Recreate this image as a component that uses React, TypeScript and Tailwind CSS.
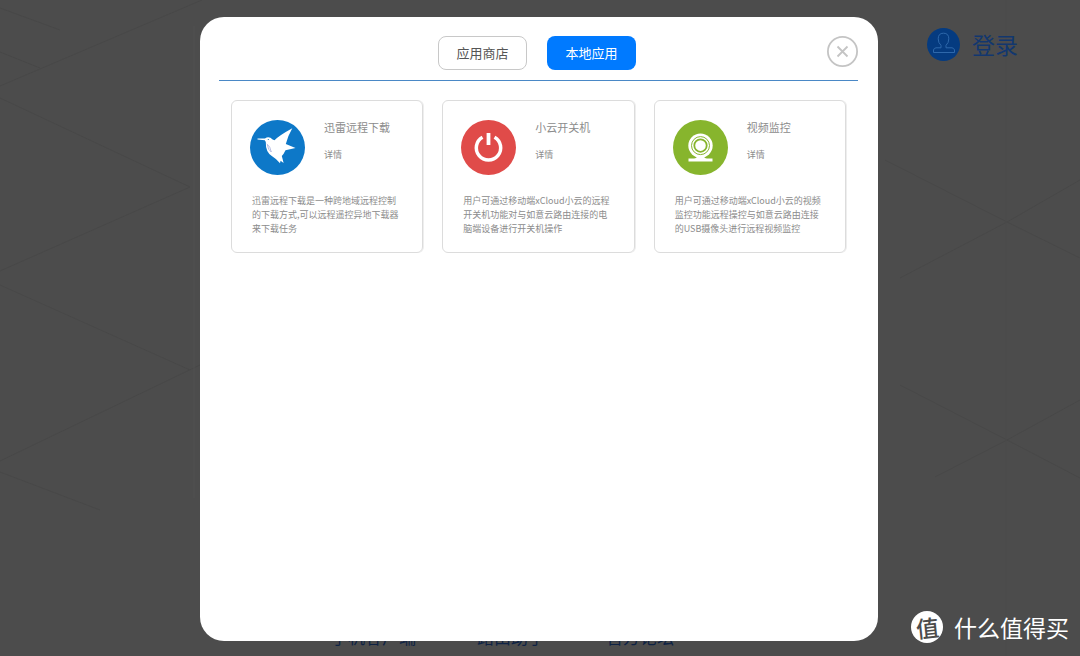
import type { ReactNode } from "react";

type App = {
  name: string;
  lines: string[];
  icon: ReactNode;
};

function BirdIcon() {
  return (
    <svg viewBox="0 0 55 55" className="size-[55px] shrink-0" aria-hidden>
      <circle cx="27.5" cy="27.5" r="27.5" fill="#0d78c8" />
      <path
        fill="#fff"
        d="M7.5 18.6 L15 18.4 Q19 15.6 22.6 19.6 L24.5 20.2 Q29 15.5 42.3 8.2 Q37.5 16.5 35.8 24 L45.5 28 L35.5 30.2 Q33.5 34.5 31.8 36 Q32.8 39.5 33.6 43 L30.6 40.8 L30 43.2 Q26 38.5 21.8 36 Q15.5 32 15.8 22 L14.8 20.2 L7.5 19.6 Z"
      />
      <path d="M16.8 23.8 Q20.5 26.5 21.3 32 Q18 30 17.4 25" fill="none" stroke="#a9b0dc" strokeWidth="0.8" />
      <circle cx="18.3" cy="19.5" r="0.6" fill="#0d78c8" />
    </svg>
  );
}

function PowerIcon() {
  return (
    <svg viewBox="0 0 55 55" className="size-[55px] shrink-0" aria-hidden>
      <circle cx="27.5" cy="27.5" r="27.5" fill="#e04b49" />
      <path d="M21.5 17.2 A12.2 12.2 0 1 0 33.5 17.2" fill="none" stroke="#fff" strokeWidth="3.5" />
      <path d="M27.5 13 V25" stroke="#fff" strokeWidth="3.8" />
    </svg>
  );
}

function CameraIcon() {
  return (
    <svg viewBox="0 0 55 55" className="size-[55px] shrink-0" aria-hidden>
      <circle cx="27.5" cy="27.5" r="27.5" fill="#87b52d" />
      <circle cx="27.5" cy="25.6" r="12.2" fill="#fff" />
      <circle cx="27.5" cy="25.6" r="9" fill="none" stroke="#87b52d" strokeWidth="1" />
      <circle cx="27.5" cy="25.6" r="6.2" fill="none" stroke="#87b52d" strokeWidth="1.8" />
      <path d="M24 36 H31 Q31 38.3 34 38.4 H39.5 V41.6 H15.5 V38.4 H21 Q24 38.3 24 36 Z" fill="#fff" />
    </svg>
  );
}

const apps: App[] = [
  {
    name: "迅雷远程下载",
    lines: ["迅雷远程下载是一种跨地域远程控制", "的下载方式,可以远程遥控异地下载器", "来下载任务"],
    icon: <BirdIcon />,
  },
  {
    name: "小云开关机",
    lines: ["用户可通过移动端xCloud小云的远程", "开关机功能对与如意云路由连接的电", "脑端设备进行开关机操作"],
    icon: <PowerIcon />,
  },
  {
    name: "视频监控",
    lines: ["用户可通过移动端xCloud小云的视频", "监控功能远程操控与如意云路由连接", "的USB摄像头进行远程视频监控"],
    icon: <CameraIcon />,
  },
];

function Backdrop() {
  return (
    <div className="pointer-events-none absolute inset-0 flex justify-between overflow-hidden" aria-hidden>
      <svg width="202" height="656" fill="none" stroke="#484848">
        <path d="M0 8 L60 30 M0 52 L40 68 M0 86 L202 0 M0 98 L190 187 L0 271 M0 285 L190 370 M202 364 L0 461 M0 472 L100 510" />
        <path d="M194 26 V498" stroke="#505050" />
      </svg>
      <svg width="202" height="656" fill="none" stroke="#484848">
        <path d="M7 160 L129 222 L202 258 M22 278 L129 222 L202 180 M22 385 L129 440 L202 478 M57 477 L129 440 L202 400" />
        <path d="M128 0 V656" stroke="#4a4a4a" />
      </svg>
    </div>
  );
}

function AppCard({ app }: { app: App }) {
  return (
    <article className="h-[153px] min-w-0 flex-1 rounded-md border border-[#dcdcdc] px-[18px] pt-[19px] shadow-[1px_0_0_#eeeeee]">
      <div className="flex gap-[19px]">
        {app.icon}
        <div className="flex flex-col items-start">
          <h2 className="text-[11px] leading-[14px] whitespace-nowrap text-[#8c8c8c]">{app.name}</h2>
          <a href="#" className="mt-[13px] text-[9px] leading-4 text-[#8c8c8c]">
            详情
          </a>
        </div>
      </div>
      <p className="mt-[19px] pl-0.5 text-[9px] leading-[14px] whitespace-nowrap text-[#8c8c8c]">
        {app.lines.map((line) => (
          <span key={line} className="block">
            {line}
          </span>
        ))}
      </p>
    </article>
  );
}

export default function App() {
  return (
    <div className="relative flex min-h-screen flex-col justify-between bg-[#4c4c4c] font-['Noto_Sans_CJK_SC',sans-serif]">
      <Backdrop />

      <header className="flex justify-end pt-7 pr-[62px]">
        <a href="#" className="relative flex items-center gap-3 text-[23px] leading-[33px] text-[#12376f]">
          <svg viewBox="0 0 33 33" className="size-[33px]" fill="none" stroke="#2e68ab" aria-hidden>
            <circle cx="16.5" cy="16.5" r="16.5" fill="#053b80" stroke="none" />
            <path d="M11.2 10.8 Q11.2 5.2 16.5 5.2 Q21.8 5.2 21.8 10.8 Q21.8 15 19 17.3 V19.8 H25 Q27 20 27.5 22 V24.5 H6.5 V22 Q7 20 9 19.8 H14 V17.3 Q11.2 15 11.2 10.8 Z" />
          </svg>
          登录
        </a>
      </header>

      <footer className="flex gap-[61px] pb-[7px] pl-[331px] text-[17px] leading-6 text-[#0f2344]">
        <a href="#">手机客户端</a>
        <a href="#">路由助手</a>
        <a href="#">官方论坛</a>
      </footer>

      {/* Dialog covers the page, leaving a thin strip above and below */}
      <div className="absolute inset-0 flex justify-center pt-[17px] pr-0.5 pb-[15px]">
        <section
          role="dialog"
          aria-label="本地应用"
          className="w-full max-w-[678px] rounded-[24px] bg-white pr-5 pl-[19px]"
        >
          <div className="grid grid-cols-[28px_1fr_31px] items-start border-b border-[#4a88c6] pt-[19px] pb-[10px]">
            <div className="col-start-2 flex justify-center gap-5">
              <button
                type="button"
                className="h-[34px] w-[89px] rounded-lg border border-[#c8c8c8] text-[13px] text-[#555555]"
              >
                应用商店
              </button>
              <button type="button" className="h-[34px] w-[89px] rounded-lg bg-[#007aff] text-[13px] text-white">
                本地应用
              </button>
            </div>
            <button type="button" aria-label="关闭" className="size-[31px]">
              <svg viewBox="0 0 31 31" fill="none" stroke="#c4c4c4" aria-hidden>
                <circle cx="15.5" cy="15.5" r="14.6" strokeWidth="1.8" />
                <path d="M10.5 10.5 L20.5 20.5 M20.5 10.5 L10.5 20.5" strokeWidth="1.8" />
              </svg>
            </button>
          </div>

          <div className="flex gap-[19px] pt-[19px] pr-3 pl-3">
            {apps.map((app) => (
              <AppCard key={app.name} app={app} />
            ))}
          </div>
        </section>
      </div>

      <div className="absolute right-[11px] bottom-[13px] flex items-center gap-[11px] text-[23px] leading-7 text-white">
        <span className="flex size-8 items-center justify-center rounded-full bg-white font-medium text-[#4c4c4c]">
          <span className="-rotate-6">值</span>
        </span>
        <span>什么值得买</span>
      </div>
    </div>
  );
}
